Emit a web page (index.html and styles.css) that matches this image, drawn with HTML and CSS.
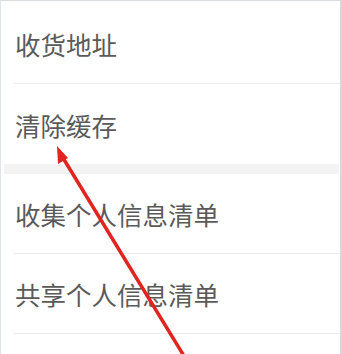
FILE: index.html
```html
<!DOCTYPE html>
<html lang="zh">
<head>
<meta charset="utf-8">
<link rel="stylesheet" href="styles.css">
</head>
<body>
<div class="frame">
  <div class="group group-first">
    <div class="item"><span class="label">收货地址</span></div>
    <div class="item item-last"><span class="label">清除缓存</span></div>
  </div>
  <div class="band"></div>
  <div class="group">
    <div class="item"><span class="label">收集个人信息清单</span></div>
    <div class="item"><span class="label">共享个人信息清单</span></div>
    <div class="item"><span class="label"></span></div>
  </div>
  <svg class="arrow" width="342" height="354" viewBox="0 0 342 354">
    <line x1="60" y1="153" x2="184" y2="356" stroke="#e0241f" stroke-width="3.5" stroke-linecap="round"/>
    <polygon points="57,146 68,158 58,164" fill="#e0241f"/>
  </svg>
</div>
</body>
</html>
```
FILE: styles.css
```css
html, body {
  margin: 0;
  padding: 0;
  background: #ffffff;
}
.frame {
  position: relative;
  width: 342px;
  height: 354px;
  box-sizing: border-box;
  border-top: 1px solid #d9dcdf;
  border-left: 1px solid #dfe5ea;
  border-right: 2px solid #d6d9dc;
  overflow: hidden;
  font-family: "Noto Sans CJK SC", "Noto Sans", sans-serif;
}
.group-first {
  padding-top: 3px;
}
.item {
  height: 80px;
  box-sizing: border-box;
  margin-left: 13px;
  padding-left: 1px;
  border-bottom: 1px solid #ececec;
  display: flex;
  align-items: center;
}
.item-last {
  border-bottom: none;
}
.label {
  font-size: 25.5px;
  color: #5a5a5a;
}
.band {
  height: 10px;
  margin: 0 1px 0 3px;
  background: #f3f3f3;
}
.arrow {
  position: absolute;
  left: -1px;
  top: -1px;
  pointer-events: none;
}
```
